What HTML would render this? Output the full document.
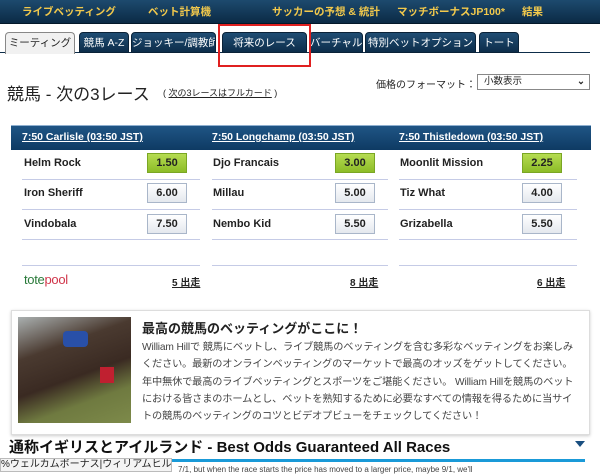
<!DOCTYPE html><html><head><meta charset="utf-8"><style>
*{margin:0;padding:0;box-sizing:border-box}
body{width:600px;height:472px;overflow:hidden;background:#fff;font-family:"Liberation Sans","Noto Sans CJK JP",sans-serif;position:relative;color:#222}
.a{position:absolute}
.nav{left:0;top:0;width:600px;height:24px;background:linear-gradient(#1d4a6e,#0b2a45);border-bottom:1px solid #03182a}
.nav span{position:absolute;top:4px;color:#f2c94c;font-size:10.5px;font-weight:bold;white-space:nowrap}
.tab{position:absolute;top:32px;height:21px;background:linear-gradient(#1f4d73,#0d2d4a);color:#fff;font-size:10.5px;line-height:20px;text-align:center;border-radius:4px 4px 0 0;border:1px solid #0a2238;white-space:nowrap;overflow:hidden}
.tab.on{background:#f1f1f1;color:#222;border-color:#888;border-bottom:none;height:22px}
.btn{position:absolute;width:40px;height:20px;border:1px solid #a9b6c9;background:linear-gradient(#fff,#e4e8ee);font-size:11px;font-weight:bold;text-align:center;line-height:18px}
.g{background:linear-gradient(#b6dc52,#8cbc27);border-color:#7aa624}
.nm{position:absolute;font-size:11px;font-weight:bold}
.ln{position:absolute;height:1px;background:#c5cbe6}
.hd{position:absolute;top:131px;color:#fff;font-size:10.5px;font-weight:bold;text-decoration:underline}
.ft{position:absolute;top:274px;font-size:10px;font-weight:bold;text-decoration:underline}
</style></head><body>
<div class="a nav">
<span style="left:22px">ライブベッティング</span><span style="left:148px">ベット計算機</span><span style="left:272px">サッカーの予想 &amp; 統計</span><span style="left:397px">マッチボーナスJP100*</span><span style="left:522px">結果</span></div>
<div class="a" style="left:0;top:52px;width:590px;height:1px;background:#0d2d4a"></div>
<div class="tab on" style="left:5px;width:70px">ミーティング</div>
<div class="tab" style="left:79px;width:50px">競馬 A-Z</div>
<div class="tab" style="left:131px;width:85px">ジョッキー/調教師</div>
<div class="tab" style="left:222px;width:85px">将来のレース</div>
<div class="tab" style="left:309px;width:54px">バーチャル</div>
<div class="tab" style="left:365px;width:111px">特別ベットオプション</div>
<div class="tab" style="left:479px;width:40px">トート</div>
<div class="a" style="left:218px;top:24px;width:93px;height:43px;border:2px solid #e02020"></div>
<div class="a" style="left:7px;top:80px;font-size:17px">競馬 - 次の3レース</div>
<div class="a" style="left:163px;top:86px;font-size:9px">( <u>次の3レースはフルカード</u> )</div>
<div class="a" style="left:376px;top:76px;font-size:10px">価格のフォーマット：</div>
<div class="a" style="left:477px;top:74px;width:113px;height:16px;border:1px solid #888;font-size:9.5px;line-height:14px;padding-left:6px">小数表示<span style="position:absolute;right:4px;font-weight:bold">⌄</span></div>
<div class="a" style="left:11px;top:125px;width:580px;height:25px;background:linear-gradient(#1f5585,#0e3a63);border-top:1px solid #8fb0d0"></div>
<div class="hd" style="left:22px">7:50 Carlisle (03:50 JST)</div>
<div class="hd" style="left:212px">7:50 Longchamp (03:50 JST)</div>
<div class="hd" style="left:399px">7:50 Thistledown (03:50 JST)</div>
<div class="nm" style="left:24px;top:157px">Helm Rock</div><div class="btn g" style="left:147px;top:153px">1.50</div>
<div class="nm" style="left:24px;top:187px">Iron Sheriff</div><div class="btn" style="left:147px;top:183px">6.00</div>
<div class="nm" style="left:24px;top:218px">Vindobala</div><div class="btn" style="left:147px;top:214px">7.50</div>
<div class="nm" style="left:213px;top:157px">Djo Francais</div><div class="btn g" style="left:335px;top:153px">3.00</div>
<div class="nm" style="left:213px;top:187px">Millau</div><div class="btn" style="left:335px;top:183px">5.00</div>
<div class="nm" style="left:213px;top:218px">Nembo Kid</div><div class="btn" style="left:335px;top:214px">5.50</div>
<div class="nm" style="left:400px;top:157px">Moonlit Mission</div><div class="btn g" style="left:522px;top:153px">2.25</div>
<div class="nm" style="left:400px;top:187px">Tiz What</div><div class="btn" style="left:522px;top:183px">4.00</div>
<div class="nm" style="left:400px;top:218px">Grizabella</div><div class="btn" style="left:522px;top:214px">5.50</div>
<div class="ln" style="left:22px;top:179px;width:178px"></div><div class="ln" style="left:22px;top:209px;width:178px"></div><div class="ln" style="left:22px;top:239px;width:178px"></div><div class="ln" style="left:22px;top:265px;width:178px"></div>
<div class="ln" style="left:212px;top:179px;width:176px"></div><div class="ln" style="left:212px;top:209px;width:176px"></div><div class="ln" style="left:212px;top:239px;width:176px"></div><div class="ln" style="left:212px;top:265px;width:176px"></div>
<div class="ln" style="left:399px;top:179px;width:178px"></div><div class="ln" style="left:399px;top:209px;width:178px"></div><div class="ln" style="left:399px;top:239px;width:178px"></div><div class="ln" style="left:399px;top:265px;width:178px"></div>
<div class="a" style="left:24px;top:272px;font-size:13px;letter-spacing:-.3px"><span style="color:#2a7a3a">tote</span><span style="color:#d0354a">pool</span></div>
<div class="ft" style="left:172px">5 出走</div><div class="ft" style="left:350px">8 出走</div><div class="ft" style="left:537px">6 出走</div>
<div class="a" style="left:11px;top:310px;width:579px;height:125px;border:1px solid #ddd;box-shadow:0 1px 3px #ccc"></div>
<div class="a" style="left:18px;top:317px;width:113px;height:106px;background:linear-gradient(160deg,#aab0b0 0%,#4a3a30 30%,#3a2a22 55%,#6f7a40 75%,#7d8a4a 100%)"><div style="position:absolute;left:45px;top:14px;width:25px;height:16px;background:#2950a8;border-radius:4px"></div><div style="position:absolute;left:82px;top:50px;width:14px;height:16px;background:#c02030"></div></div>
<div class="a" style="left:142px;top:318px;font-size:13px;font-weight:bold">最高の競馬のベッティングがここに！</div>
<div class="a" style="left:142px;top:339px;width:436px;font-size:10.2px;letter-spacing:-.15px;line-height:17.3px;color:#444">William Hillで 競馬にベットし、ライブ競馬のベッティングを含む多彩なベッティングをお楽しみください。最新のオンラインベッティングのマーケットで最高のオッズをゲットしてください。 年中無休で最高のライブベッティングとスポーツをご堪能ください。 William Hillを競馬のベットにおける皆さまのホームとし、ベットを熟知するために必要なすべての情報を得るために当サイトの競馬のベッティングのコツとビデオプビューをチェックしてください！</div>
<div class="a" style="left:9px;top:436px;font-size:15px;font-weight:bold;color:#111">通称イギリスとアイルランド - Best Odds Guaranteed All Races</div>
<div class="a" style="left:575px;top:441px;width:0;height:0;border-left:5px solid transparent;border-right:5px solid transparent;border-top:6px solid #1a4f80"></div>
<div class="a" style="left:170px;top:459px;width:415px;height:3px;background:#1a9ad8"></div>
<div class="a" style="left:0;top:458px;width:172px;height:14px;background:#f4f4f4;border:1px solid #bbb;font-size:10px;line-height:12px;white-space:nowrap;overflow:hidden">%ウェルカムボーナス|ウィリアムヒル ♤ ◉</div>
<div class="a" style="left:178px;top:465px;font-size:8px;color:#444;white-space:nowrap">7/1, but when the race starts the price has moved to a larger price, maybe 9/1, we'll</div>
</body></html>
